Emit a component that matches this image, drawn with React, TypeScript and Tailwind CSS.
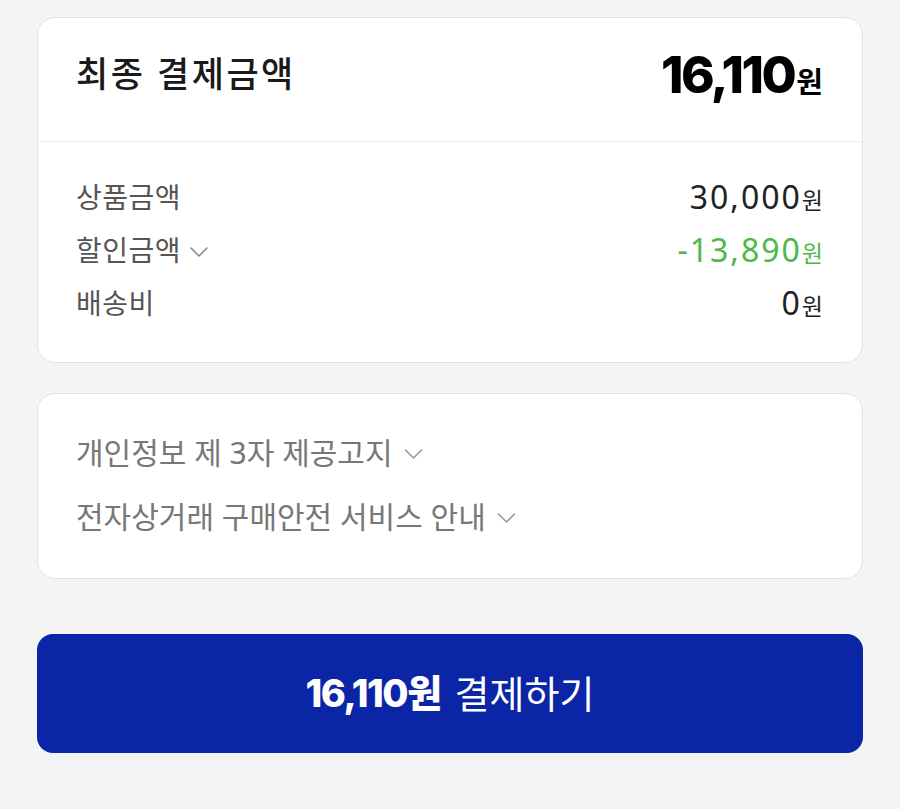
import React from 'react'

const font = { fontFamily: '"Noto Sans", "Noto Sans CJK KR", sans-serif' }
const numFont = { fontFamily: 'Inter, "Noto Sans CJK KR", sans-serif' }

function Chevron({ className }: { className?: string }) {
    return (
        <svg viewBox="0 0 20 12" className={className} fill="none" stroke="currentColor" strokeWidth="1.6" strokeLinecap="round" strokeLinejoin="round">
            <path d="M2 2l8 8 8-8" />
        </svg>
    )
}

export default function App() {
    return (
        <div className="min-h-[809px] w-[900px] bg-[#f4f4f4] pt-[17px] px-[37px]" style={font}>
            <div className="rounded-[18px] border border-[#e3e3e3] bg-white">
                <div className="flex h-[123px] items-center justify-between pl-[38px] pr-[39px] pb-[10px]">
                    <h2 className="text-[35px] font-medium text-[#1a1a1a] tracking-[2.5px]">최종 결제금액</h2>
                    <div className="flex items-baseline text-black">
                        <span className="text-[51px] font-extrabold tracking-[-2.5px] leading-none" style={numFont}>16,110</span>
                        <span className="ml-[2px] text-[29px] font-bold leading-none">원</span>
                    </div>
                </div>
                <div className="h-px bg-[#ececec]" />
                <div className="flex flex-col gap-[13px] pl-[38px] pr-[39px] pt-[35px] pb-[39px] text-[28px] tracking-[0.5px]">
                    <div className="flex items-center justify-between h-[40px]">
                        <span className="text-[#555]">상품금액</span>
                        <span className="text-[32px] text-[#222] tracking-[2px]">30,000<span className="text-[23px] tracking-normal">원</span></span>
                    </div>
                    <div className="flex items-center justify-between h-[40px]">
                        <span className="flex items-center text-[#555]">할인금액<Chevron className="ml-[8px] mt-[4px] h-[12px] w-[20px] text-[#888]" /></span>
                        <span className="text-[32px] text-[#4cb847] tracking-[2px]">-13,890<span className="text-[23px] tracking-normal">원</span></span>
                    </div>
                    <div className="flex items-center justify-between h-[40px]">
                        <span className="text-[#555]">배송비</span>
                        <span className="text-[32px] text-[#222] tracking-[2px]">0<span className="text-[23px] tracking-normal">원</span></span>
                    </div>
                </div>
            </div>

            <div className="mt-[30px] rounded-[18px] border border-[#e3e3e3] bg-white pl-[38px] pt-[38px] pb-[42px] flex flex-col gap-[24px] text-[30px] text-[#777]">
                <div className="flex items-center h-[40px]">개인정보 제 3자 제공고지<Chevron className="ml-[10px] mt-[4px] h-[12px] w-[21px] text-[#999]" /></div>
                <div className="flex items-center h-[40px]">전자상거래 구매안전 서비스 안내<Chevron className="ml-[10px] mt-[4px] h-[12px] w-[21px] text-[#999]" /></div>
            </div>

            <button className="mt-[55px] flex h-[119px] w-full items-center justify-center rounded-[16px] bg-[#0a26a6] text-white text-[38px]">
                <span className="font-extrabold tracking-[-1.5px]" style={numFont}>16,110원</span>
                <span className="ml-[14px]">결제하기</span>
            </button>
        </div>
    )
}
